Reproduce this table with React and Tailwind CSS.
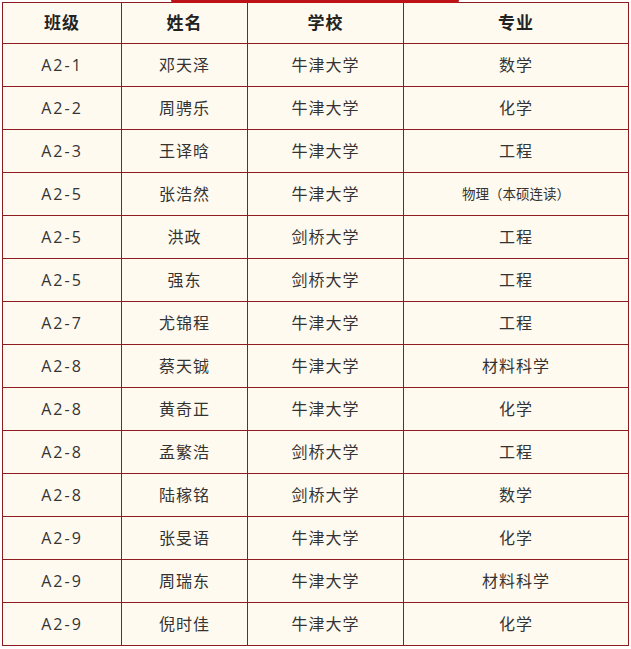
import React from 'react';

const rows = [
  ['A2-1', '邓天泽', '牛津大学', '数学'],
  ['A2-2', '周骋乐', '牛津大学', '化学'],
  ['A2-3', '王译晗', '牛津大学', '工程'],
  ['A2-5', '张浩然', '牛津大学', '物理（本硕连读）'],
  ['A2-5', '洪政', '剑桥大学', '工程'],
  ['A2-5', '强东', '剑桥大学', '工程'],
  ['A2-7', '尤锦程', '牛津大学', '工程'],
  ['A2-8', '蔡天铖', '牛津大学', '材料科学'],
  ['A2-8', '黄奇正', '牛津大学', '化学'],
  ['A2-8', '孟繁浩', '剑桥大学', '工程'],
  ['A2-8', '陆稼铭', '剑桥大学', '数学'],
  ['A2-9', '张旻语', '牛津大学', '化学'],
  ['A2-9', '周瑞东', '牛津大学', '材料科学'],
  ['A2-9', '倪时佳', '牛津大学', '化学'],
];

const widths = ['w-[119px]', 'w-[126px]', 'w-[156px]', 'w-[225px]'];

export default function App() {
  return (
    <div className="relative min-h-[649px] w-[631px] bg-white font-['Open_Sans','Noto_Sans_CJK_SC',sans-serif]">
      {/* red ribbon peeking over the top */}
      <div className="absolute top-0 left-[171px] z-10 h-[3px] w-[288px] rounded-b-[3px] bg-[#be1219]" />

      <div className="ml-[2px] pt-[2px]">
        <div className="w-[627px] border-l border-t border-[#8e1b22] bg-[#fffaf0]">
          <div className="flex h-[41px]">
            {['班级', '姓名', '学校', '专业'].map((h, i) => (
              <div
                key={h}
                className={`${widths[i]} flex items-center justify-center border-r border-b border-[#8e1b22] text-[17px] font-bold tracking-[1px] text-[#222]`}
              >
                {h}
              </div>
            ))}
          </div>

          {rows.map((r, idx) => (
            <div key={idx} className="flex h-[43px]">
              {r.map((c, i) => (
                <div
                  key={i}
                  className={`${widths[i]} flex items-center justify-center border-r border-b border-[#8e1b22] text-[#333] ${
                    i === 0
                      ? 'text-[16px] tracking-[2px]'
                      : c.length > 6
                      ? 'text-[13.5px]'
                      : 'text-[16px] tracking-[1px]'
                  }`}
                >
                  {c}
                </div>
              ))}
            </div>
          ))}
        </div>
      </div>
    </div>
  );
}
